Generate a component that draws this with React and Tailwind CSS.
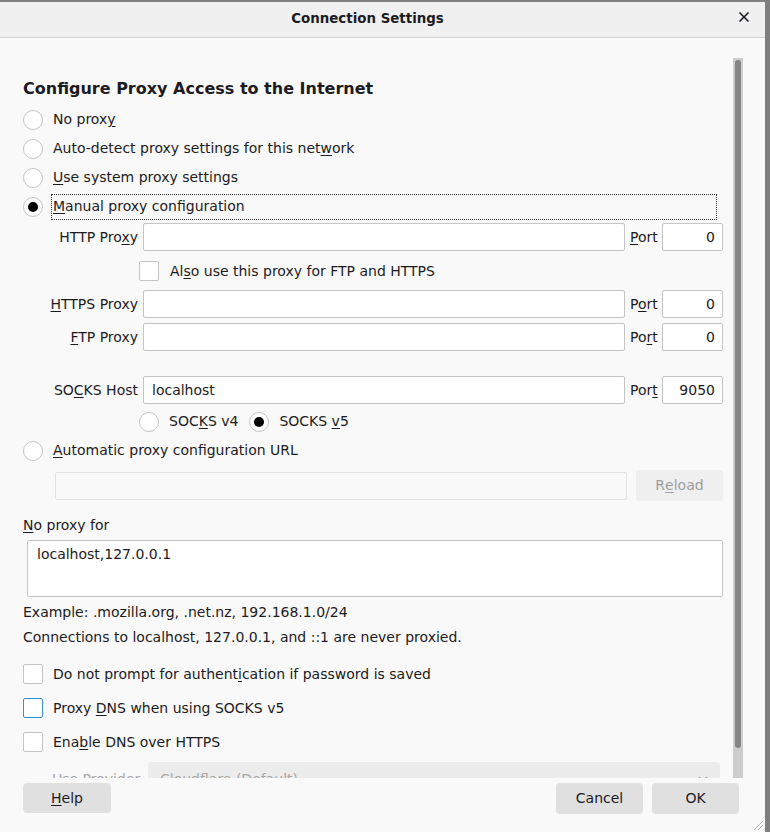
const Radio = ({ checked }) => (
  <span className="w-[20px] h-[20px] rounded-full border border-[#c4c4c4] bg-white flex items-center justify-center shrink-0">
    {checked && <span className="w-[10px] h-[10px] rounded-full bg-black" />}
  </span>
);

const Check = ({ focus }) => (
  <span
    className={`w-[20px] h-[20px] rounded-[2px] border bg-white shrink-0 ${
      focus ? 'border-[#3a8ecf]' : 'border-[#c4c4c4]'
    }`}
  />
);

// access-key underline
const K = ({ children }) => <span className="underline underline-offset-2">{children}</span>;

const Input = ({ value, className = '' }) => (
  <div className={`h-[28px] bg-white border border-[#c4c4c4] rounded-[2px] flex items-center ${className}`}>
    {value}
  </div>
);

const ProxyRow = ({ label, port, value, portValue, className = '' }) => (
  <div className={`flex items-center ${className}`}>
    <div className="w-[120px] text-right pr-[5px] shrink-0">{label}</div>
    <Input className="flex-1 pl-[8px]" value={value} />
    <div className="w-[37px] pl-[5px] shrink-0">{port}</div>
    <Input className="w-[61px] justify-end pr-[7px]" value={portValue} />
  </div>
);

export default function App() {
  return (
    <div
      className="w-[770px] h-[832px] bg-[#7f7f7f] pt-[2px] pr-[5px] text-[14px] text-[#1c1b22]"
      style={{ fontFamily: '"DejaVu Sans", sans-serif' }}
    >
      <div className="h-full flex flex-col bg-[#f9f9f9]">
        {/* TITLE BAR */}
        <div className="h-[36px] shrink-0 bg-[#f0f0f0] border-b border-[#d5d5d5] flex items-center relative">
          <div className="flex-1 text-center font-bold text-[13.4px] pr-[30px]">Connection Settings</div>
          <span className="absolute right-[15px] top-[9px]">
            <svg width="12" height="12" viewBox="0 0 12 12" stroke="#1c1b22" strokeWidth="1.6">
              <line x1="1.5" y1="1.5" x2="10.5" y2="10.5" />
              <line x1="10.5" y1="1.5" x2="1.5" y2="10.5" />
            </svg>
          </span>
        </div>

        {/* SCROLL REGION */}
        <div className="h-[740px] shrink-0 flex overflow-hidden">
          <div className="w-[733px] shrink-0 pl-[23px] pr-[10px] pt-[39px]">
            <div className="h-[24px] flex items-center font-bold text-[16px]">
              Configure Proxy Access to the Internet
            </div>

            <div className="mt-[4px]">
              <div className="h-[29px] flex items-center gap-[10px]">
                <Radio />
                <span>No prox<K>y</K></span>
              </div>
              <div className="h-[29px] flex items-center gap-[10px]">
                <Radio />
                <span>Auto-detect proxy settings for this net<K>w</K>ork</span>
              </div>
              <div className="h-[29px] flex items-center gap-[10px]">
                <Radio />
                <span><K>U</K>se system proxy settings</span>
              </div>
              <div className="h-[29px] flex items-center gap-[8px]">
                <Radio checked />
                <span className="h-[26px] w-[666px] border border-dotted border-[#333] flex items-center pl-[1px]">
                  <span><K>M</K>anual proxy configuration</span>
                </span>
              </div>
            </div>

            <div className="mt-[2px]">
              <ProxyRow label={<>HTTP Pro<K>x</K>y</>} port={<><K>P</K>ort</>} portValue="0" />

              <div className="h-[20px] mt-[10px] flex items-center gap-[11px] pl-[116px]">
                <Check />
                <span>Al<K>s</K>o use this proxy for FTP and HTTPS</span>
              </div>

              <ProxyRow className="mt-[9px]" label={<><K>H</K>TTPS Proxy</>} port={<>P<K>o</K>rt</>} portValue="0" />
              <ProxyRow className="mt-[5px]" label={<><K>F</K>TP Proxy</>} port={<>Po<K>r</K>t</>} portValue="0" />
              <ProxyRow
                className="mt-[25px]"
                label={<>SO<K>C</K>KS Host</>}
                value="localhost"
                port={<>Por<K>t</K></>}
                portValue="9050"
              />

              <div className="h-[29px] mt-[3px] flex items-center pl-[116px]">
                <Radio />
                <span className="ml-[10px]">SOC<K>K</K>S v4</span>
                <span className="ml-[11px]"><Radio checked /></span>
                <span className="ml-[10px]">SOCKS <K>v</K>5</span>
              </div>
            </div>

            <div className="h-[29px] flex items-center gap-[10px]">
              <Radio />
              <span><K>A</K>utomatic proxy configuration URL</span>
            </div>

            <div className="flex items-center mt-[5px] pl-[32px]">
              <div className="flex-1 h-[28px] border border-[#e3e3e3] rounded-[2px] bg-[#f9f9f9]" />
              <div className="w-[87px] h-[31px] ml-[9px] bg-[#efefef] rounded-[3px] flex items-center justify-center text-[#9d9d9d]">
                R<K>e</K>load
              </div>
            </div>

            <div className="h-[20px] mt-[14px] flex items-center">
              <span><K>N</K>o proxy for</span>
            </div>

            <div className="ml-[4px] mt-[5px] h-[57px] bg-white border border-[#c4c4c4] rounded-[2px] px-[9px] pt-[3px]">
              localhost,127.0.0.1
            </div>

            <div className="h-[20px] mt-[5px] flex items-center">
              Example: .mozilla.org, .net.nz, 192.168.1.0/24
            </div>
            <div className="h-[20px] mt-[5px] flex items-center">
              Connections to localhost, 127.0.0.1, and ::1 are never proxied.
            </div>

            <div className="h-[20px] mt-[17px] flex items-center gap-[10px]">
              <Check />
              <span>Do not prompt for authent<K>i</K>cation if password is saved</span>
            </div>
            <div className="h-[20px] mt-[14px] flex items-center gap-[10px]">
              <Check focus />
              <span>Proxy <K>D</K>NS when using SOCKS v5</span>
            </div>
            <div className="h-[20px] mt-[14px] flex items-center gap-[10px]">
              <Check />
              <span>Ena<K>b</K>le DNS over HTTPS</span>
            </div>

            <div className="h-[34px] flex items-center mt-[10px] pl-[29px]">
              <span className="w-[96px] text-[#a8a8a8]">Use Provider</span>
              <div className="flex-1 h-full mr-[3px] bg-[#ececec] rounded-[3px] flex items-center justify-between px-[12px] text-[#a8a8a8]">
                <span>Cloudflare (Default)</span>
                <svg width="10" height="6" viewBox="0 0 10 6" fill="none" stroke="#a8a8a8" strokeWidth="1.4">
                  <path d="M1 1l4 4 4-4" />
                </svg>
              </div>
            </div>
          </div>

          {/* SCROLLBAR */}
          <div className="w-[10px] shrink-0 pt-[20px]">
            <div className="h-full bg-[#cdcdcd] pt-[2px] flex justify-center">
              <div className="w-[6px] h-[688px] rounded-full bg-[#858585]" />
            </div>
          </div>
        </div>

        {/* FOOTER */}
        <div className="flex-1 flex items-start pt-[5px] pl-[23px] pr-[26px] relative">
          <div className="w-[88px] h-[30px] bg-[#e0e0e0] rounded-[4px] flex items-center justify-center">
            <span><K>H</K>elp</span>
          </div>
          <div className="flex-1" />
          <div className="w-[87px] h-[31px] bg-[#e0e0e0] rounded-[4px] flex items-center justify-center">
            Cancel
          </div>
          <div className="w-[87px] h-[31px] ml-[9px] bg-[#e0e0e0] rounded-[4px] flex items-center justify-center">
            OK
          </div>
          <svg className="absolute right-[1px] bottom-[1px]" width="12" height="12" viewBox="0 0 12 12" stroke="#b5b5b5" strokeWidth="1">
            <line x1="11" y1="2" x2="2" y2="11" />
            <line x1="11" y1="6" x2="6" y2="11" />
          </svg>
        </div>
      </div>
    </div>
  );
}
